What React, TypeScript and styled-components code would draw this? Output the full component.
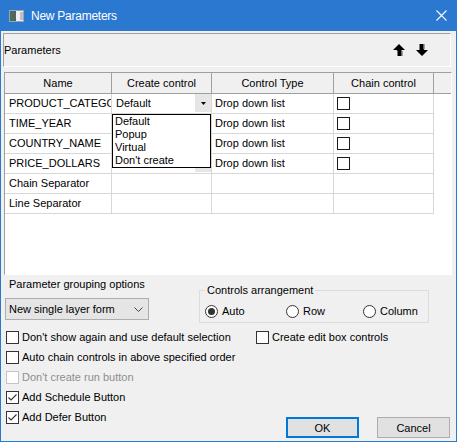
import React from 'react';
import styled, { createGlobalStyle } from 'styled-components';

const Global = createGlobalStyle`
  html, body { margin: 0; padding: 0; background: #fff; }
  body { font-family: "Liberation Sans", Arial, sans-serif; }
`;

const Window = styled.div`
  width: 457px;
  height: 442px;
  box-sizing: border-box;
  display: flex;
  flex-direction: column;
  border: 1px solid #2b78d0;
  border-top: none;
  background: #f0f0f0;
  font-family: "Liberation Sans", Arial, sans-serif;
  font-size: 11px;
  color: #000;
  overflow: hidden;
`;

const TitleBar = styled.div`
  height: 31px;
  flex: none;
  display: flex;
  align-items: center;
  background: #2b78d0;
  color: #fff;
  padding: 0 9px 0 8px;
`;

const TitleText = styled.span`
  margin-left: 7px;
  font-size: 12px;
  letter-spacing: -0.25px;
`;

const CloseBox = styled.span`
  margin-left: auto;
  display: flex;
`;

const ParamPanel = styled.div`
  margin: 2px 0 0 2px;
  width: 448px;
  height: 34px;
  box-sizing: border-box;
  flex: none;
  display: flex;
  align-items: center;
  border: 1px solid;
  border-color: #a0a0a0 #fff #fff #a0a0a0;
`;

const Arrows = styled.div`
  margin-left: auto;
  margin-right: 22px;
  display: flex;
  gap: 11px;
`;

const Grid = styled.div`
  margin: 5px 0 0 3px;
  width: 448px;
  height: 203px;
  box-sizing: border-box;
  flex: none;
  background: #fff;
  border: 1px solid;
  border-color: #a0a0a0 #fff #fff #a0a0a0;
`;

const HeaderRow = styled.div`
  display: flex;
  height: 21px;
  box-sizing: border-box;
  border-bottom: 1px solid #a0a0a0;
  background: #f0f0f0;
`;

const HeaderCell = styled.div<{ $w?: number }>`
  ${(p) => (p.$w ? `width: ${p.$w}px;` : 'flex: 1;')}
  box-sizing: border-box;
  display: flex;
  align-items: center;
  justify-content: center;
  border-right: ${(p) => (p.$w ? '1px solid #a0a0a0' : 'none')};
  white-space: nowrap;
`;

const DataRow = styled.div`
  display: flex;
  height: 20px;
`;

const Cell = styled.div<{ $w: number; $pad?: number; $overlay?: boolean }>`
  width: ${(p) => p.$w}px;
  box-sizing: border-box;
  display: flex;
  align-items: center;
  padding-left: ${(p) => p.$pad ?? 3}px;
  padding-bottom: 1px;
  border-right: 1px solid #d7d7d7;
  border-bottom: 1px solid #d7d7d7;
  white-space: nowrap;
  overflow: ${(p) => (p.$overlay ? 'visible' : 'hidden')};
  position: ${(p) => (p.$overlay ? 'relative' : 'static')};
`;

const ComboButton = styled.span`
  margin-left: auto;
  width: 16px;
  height: 18px;
  flex: none;
  background: #e6e6e6;
  display: flex;
  align-items: center;
  justify-content: center;
`;

const DropList = styled.div`
  position: absolute;
  top: 20px;
  left: 0;
  width: 99px;
  box-sizing: border-box;
  border: 1px solid #000;
  background: #fff;
  z-index: 2;
  padding-left: 2px;
`;

const DropItem = styled.div`
  height: 13px;
  line-height: 13px;
`;

const GridBox = styled.span`
  width: 13px;
  height: 13px;
  box-sizing: border-box;
  border: 1px solid #1a1a1a;
  background: #fff;
`;

const OptionsRow = styled.div`
  margin-top: 2px;
  padding-left: 4px;
  display: grid;
  grid-template-columns: 144px 230px;
  column-gap: 50px;
  flex: none;
`;

const GroupingCol = styled.div`
  display: flex;
  flex-direction: column;
`;

const Label = styled.div`
  line-height: 14px;
  padding-left: 4px;
`;

const Select = styled.div`
  margin-top: 7px;
  height: 22px;
  box-sizing: border-box;
  border: 1px solid #adadad;
  background: #e5e5e5;
  display: flex;
  align-items: center;
  padding: 0 5px 0 3px;
`;

const Chevron = styled.span`
  margin-left: auto;
  display: flex;
`;

const GroupBox = styled.fieldset`
  margin: 6px 0 0 0;
  padding: 0 0 1px 5px;
  border: 1px solid #dcdcdc;
  min-width: 0;
`;

const Legend = styled.legend`
  padding: 0 2px;
  line-height: 14px;
  font-size: 11px;
`;

const RadioRow = styled.div`
  display: flex;
  height: 20px;
  align-items: center;
  margin-top: 4px;
`;

const RadioItem = styled.label<{ $w?: number }>`
  display: flex;
  align-items: center;
  gap: 4px;
  ${(p) => (p.$w ? `width: ${p.$w}px;` : '')}
`;

const RadioCircle = styled.span<{ $on?: boolean }>`
  width: 13px;
  height: 13px;
  box-sizing: border-box;
  border-radius: 50%;
  border: 1px solid #333;
  background: #fff;
  display: flex;
  align-items: center;
  justify-content: center;
  &::after {
    content: '';
    display: ${(p) => (p.$on ? 'block' : 'none')};
    width: 7px;
    height: 7px;
    border-radius: 50%;
    background: #333;
  }
`;

const CheckRow = styled.div`
  display: flex;
  height: 20px;
  align-items: center;
  padding-left: 5px;
  flex: none;
`;

const CheckItem = styled.label<{ $w?: number; $disabled?: boolean }>`
  display: flex;
  align-items: center;
  gap: 3px;
  color: ${(p) => (p.$disabled ? '#8e8e8e' : '#000')};
  ${(p) => (p.$w ? `width: ${p.$w}px;` : '')}
`;

const Box = styled.span<{ $disabled?: boolean }>`
  width: 13px;
  height: 13px;
  box-sizing: border-box;
  border: 1px solid ${(p) => (p.$disabled ? '#c4c4c4' : '#333')};
  background: #fff;
  display: flex;
  align-items: center;
  justify-content: center;
`;

const BottomRow = styled.div`
  flex: 1;
  display: flex;
  padding-bottom: 3px;
`;

const CheckList = styled.div`
  display: flex;
  flex-direction: column;
  align-self: flex-start;
`;

const ButtonBar = styled.div`
  margin-left: auto;
  margin-right: 6px;
  align-self: flex-end;
  display: flex;
  gap: 18px;
`;

const Button = styled.button<{ $default?: boolean }>`
  width: 73px;
  height: 21px;
  box-sizing: border-box;
  background: #e1e1e1;
  border: ${(p) => (p.$default ? '2px solid #0078d7' : '1px solid #adadad')};
  font-family: "Liberation Sans", Arial, sans-serif;
  font-size: 11px;
  color: #000;
  padding: 0;
`;

const Check = ({ on, disabled }: { on?: boolean; disabled?: boolean }) => (
  <Box $disabled={disabled}>
    {on && (
      <svg width="11" height="11" viewBox="0 0 11 11">
        <polyline points="1.5,5.5 4,8 9.5,2.5" fill="none" stroke="#333" strokeWidth="1.1" />
      </svg>
    )}
  </Box>
);

const Triangle = () => (
  <svg width="5" height="3" viewBox="0 0 5 3">
    <polygon points="0,0 5,0 2.5,3" fill="#000" />
  </svg>
);

const UpArrow = () => (
  <svg width="12" height="12" viewBox="0 0 12 12">
    <path d="M6 0 L12 6 L8.5 6 L8.5 12 L4.5 12 L4.5 7 L3.5 6 L0 6 Z" fill="#000" />
    <path d="M8.5 7 L9.5 7 L9.5 12 L8.5 12 Z" fill="#555" />
  </svg>
);

const DownArrow = () => (
  <svg width="12" height="12" viewBox="0 0 12 12">
    <path d="M6 12 L0 6 L3.5 6 L3.5 0 L7.5 0 L7.5 5 L8.5 6 L12 6 Z" fill="#000" />
    <path d="M7.5 0 L8.5 0 L8.5 5 L7.5 5 Z" fill="#555" />
  </svg>
);

const cols = [107, 100, 122, 100];

type Row = { name: string; combo?: boolean };
const rows: Row[] = [
  { name: 'PRODUCT_CATEGORY', combo: true },
  { name: 'TIME_YEAR', combo: true },
  { name: 'COUNTRY_NAME', combo: true },
  { name: 'PRICE_DOLLARS', combo: true },
  { name: 'Chain Separator' },
  { name: 'Line Separator' },
];

export default function App() {
  return (
    <>
      <Global />
      <Window>
        <TitleBar>
          <svg width="15" height="12" viewBox="0 0 15 12">
            <rect x="0.5" y="0.5" width="14" height="11" fill="#eef0f2" stroke="#9aa4ae" />
            <rect x="1" y="1" width="6" height="10" fill="#4e6a5c" />
            <rect x="11" y="2" width="3" height="8" fill="#b8c2cc" />
          </svg>
          <TitleText>New Parameters</TitleText>
          <CloseBox>
            <svg width="11" height="11" viewBox="0 0 11 11">
              <path d="M0.5 0.5 L10.5 10.5 M10.5 0.5 L0.5 10.5" stroke="#fff" strokeWidth="1.1" />
            </svg>
          </CloseBox>
        </TitleBar>

        <ParamPanel>
          <span>Parameters</span>
          <Arrows>
            <UpArrow />
            <DownArrow />
          </Arrows>
        </ParamPanel>

        <Grid>
          <HeaderRow>
            <HeaderCell $w={cols[0]}>Name</HeaderCell>
            <HeaderCell $w={cols[1]}>Create control</HeaderCell>
            <HeaderCell $w={cols[2]}>Control Type</HeaderCell>
            <HeaderCell $w={cols[3]}>Chain control</HeaderCell>
            <HeaderCell />
          </HeaderRow>
          {rows.map((r, i) => (
            <DataRow key={r.name}>
              <Cell $w={cols[0]} $pad={4}>{r.name}</Cell>
              <Cell $w={cols[1]} $pad={4} $overlay={i === 0}>
                {i === 0 && <span>Default</span>}
                {r.combo && (
                  <ComboButton>
                    <Triangle />
                  </ComboButton>
                )}
                {i === 0 && (
                  <DropList>
                    <DropItem>Default</DropItem>
                    <DropItem>Popup</DropItem>
                    <DropItem>Virtual</DropItem>
                    <DropItem>Don't create</DropItem>
                  </DropList>
                )}
              </Cell>
              <Cell $w={cols[2]}>{r.combo ? 'Drop down list' : ''}</Cell>
              <Cell $w={cols[3]}>{r.combo && <GridBox />}</Cell>
            </DataRow>
          ))}
        </Grid>

        <OptionsRow>
          <GroupingCol>
            <Label>Parameter grouping options</Label>
            <Select>
              <span>New single layer form</span>
              <Chevron>
                <svg width="9" height="5" viewBox="0 0 9 5">
                  <polyline points="0.5,0.5 4.5,4.5 8.5,0.5" fill="none" stroke="#444" strokeWidth="1" />
                </svg>
              </Chevron>
            </Select>
          </GroupingCol>
          <GroupBox>
            <Legend>Controls arrangement</Legend>
            <RadioRow>
              <RadioItem $w={81}>
                <RadioCircle $on />
                Auto
              </RadioItem>
              <RadioItem $w={77}>
                <RadioCircle />
                Row
              </RadioItem>
              <RadioItem>
                <RadioCircle />
                Column
              </RadioItem>
            </RadioRow>
          </GroupBox>
        </OptionsRow>

        <CheckRow style={{ marginTop: 4 }}>
          <CheckItem $w={250}>
            <Check />
            Don't show again and use default selection
          </CheckItem>
          <CheckItem>
            <Check />
            Create edit box controls
          </CheckItem>
        </CheckRow>

        <BottomRow>
          <CheckList>
            <CheckRow>
              <CheckItem>
                <Check />
                Auto chain controls in above specified order
              </CheckItem>
            </CheckRow>
            <CheckRow>
              <CheckItem $disabled>
                <Check disabled />
                Don't create run button
              </CheckItem>
            </CheckRow>
            <CheckRow>
              <CheckItem>
                <Check on />
                Add Schedule Button
              </CheckItem>
            </CheckRow>
            <CheckRow>
              <CheckItem>
                <Check on />
                Add Defer Button
              </CheckItem>
            </CheckRow>
          </CheckList>
          <ButtonBar>
            <Button $default>OK</Button>
            <Button>Cancel</Button>
          </ButtonBar>
        </BottomRow>
      </Window>
    </>
  );
}
